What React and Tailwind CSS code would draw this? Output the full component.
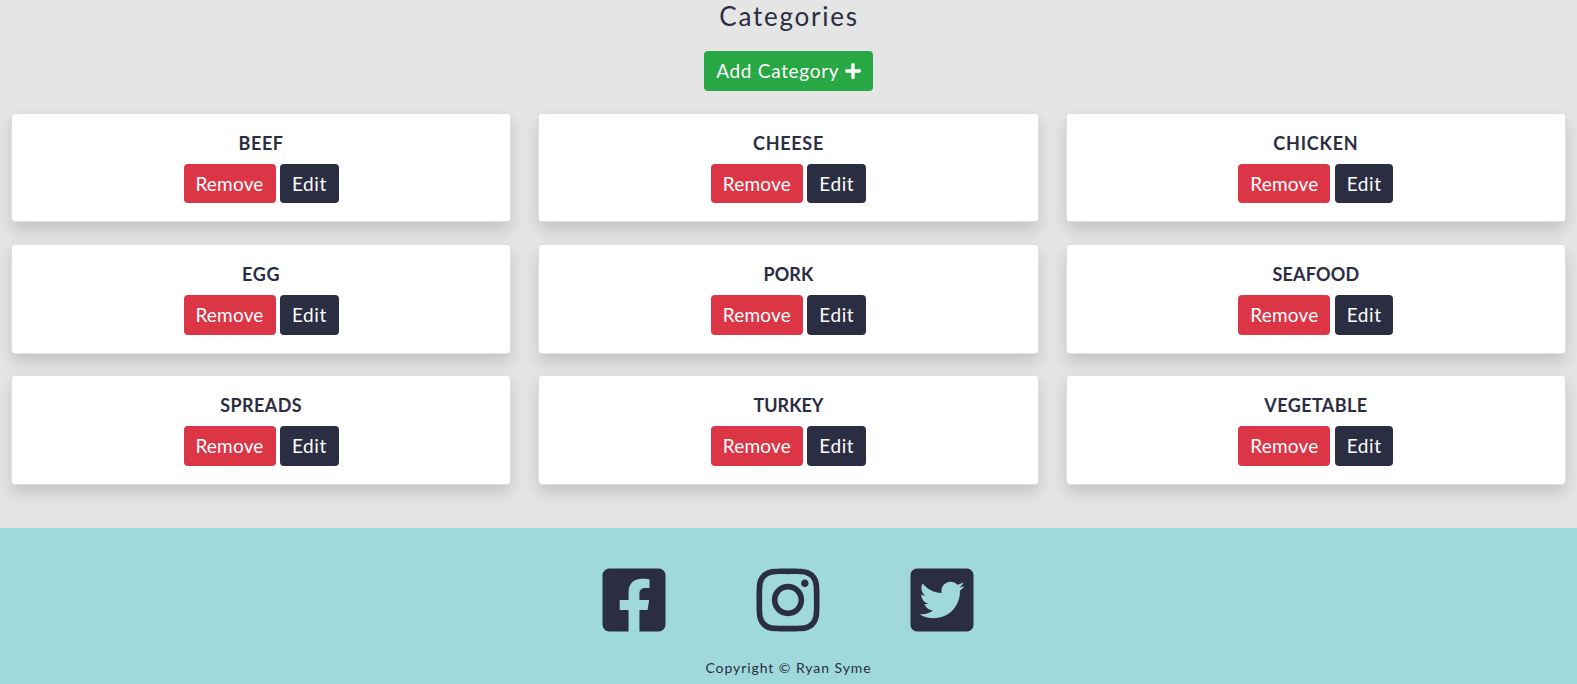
import { FaFacebookSquare, FaInstagram, FaTwitterSquare, FaPlus } from "react-icons/fa";

const categories = [
  { name: "BEEF", tracking: "tracking-[0.6px]" },
  { name: "CHEESE", tracking: "tracking-[0.7px]" },
  { name: "CHICKEN", tracking: "tracking-[0.8px]" },
  { name: "EGG", tracking: "tracking-[0.7px]" },
  { name: "PORK", tracking: "tracking-[0.1px]" },
  { name: "SEAFOOD", tracking: "tracking-[0.2px]" },
  { name: "SPREADS", tracking: "tracking-[0.4px]" },
  { name: "TURKEY", tracking: "tracking-[0px]" },
  { name: "VEGETABLE", tracking: "tracking-[0.4px]" },
];

function CategoryCard({ name, tracking }) {
  return (
    <div className="flex h-[109.6px] flex-col items-center rounded-[4px] border border-black/[0.125] bg-white bg-clip-border pt-[18px] shadow-[0_8px_16px_rgba(0,0,0,0.15)]">
      <h2 className={`h-[22px] text-[18px] leading-[22px] font-bold whitespace-nowrap ${tracking}`}>{name}</h2>
      <div className="mt-[10.2px] flex gap-[4.6px] text-[19px] text-white">
        <button className="flex h-[39.4px] w-[92px] items-center justify-center rounded-[4px] bg-[#dc3545] tracking-[0.2px]">Remove</button>
        <button className="flex h-[39.4px] w-[58.6px] items-center justify-center rounded-[4px] bg-[#2b2d42] tracking-[0.6px]">Edit</button>
      </div>
    </div>
  );
}

export default function App() {
  return (
    <div className="flex h-[684px] flex-col overflow-hidden bg-[#e5e5e5] font-['Lato','Open_Sans',sans-serif] text-[#2b2d42]">
      <main className="flex h-[528px] shrink-0 flex-col items-center">
        <h1 className="h-[51px] pl-px text-[26px] leading-[33px] tracking-[1.75px]">Categories</h1>
        <button className="flex h-[40px] w-[169px] shrink-0 items-center justify-center gap-[4.5px] rounded-[4px] bg-[#28a745] pl-px text-[19px] text-white">
          <span className="tracking-[0.7px]">Add Category</span>
          <FaPlus className="size-[18px]" />
        </button>
        <div className="mt-[21.9px] grid w-full grid-cols-3 gap-x-[27.2px] gap-y-[21.6px] px-[11px]">
          {categories.map((c) => (
            <CategoryCard key={c.name} {...c} />
          ))}
        </div>
      </main>
      <footer className="flex flex-1 flex-col items-center bg-[#a0d9dc]">
        <div className="mt-[36px] mr-[0.4px] flex gap-[82px]">
          <FaFacebookSquare className="size-[72px]" />
          <FaInstagram className="size-[72px]" />
          <FaTwitterSquare className="size-[72px]" />
        </div>
        <p className="mt-[21px] text-[14px] leading-[22px] tracking-[0.93px]">Copyright © Ryan Syme</p>
      </footer>
    </div>
  );
}
